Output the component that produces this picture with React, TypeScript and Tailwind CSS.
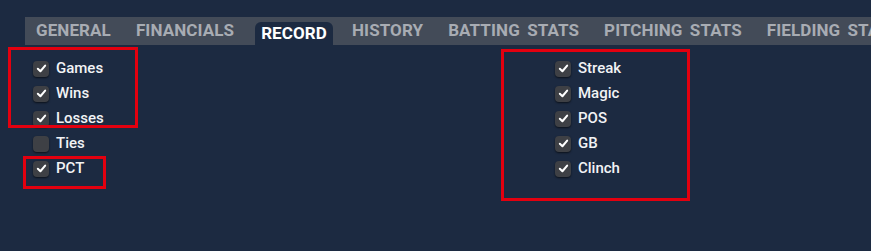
import { useState } from "react"

const tabs = ["GENERAL", "FINANCIALS", "RECORD", "HISTORY", "BATTING STATS", "PITCHING STATS", "FIELDING STATS"]

function Check({ label, checked }: { label: string; checked: boolean }) {
  const [on, setOn] = useState(checked)
  return (
    <button type="button" onClick={() => setOn(!on)} className="flex h-[25px] items-center gap-[7px]">
      <span className="flex h-[16px] w-[16px] items-center justify-center rounded-[4px] bg-[#3e4045] shadow-[0_1px_2px_rgba(0,0,0,0.6)]">
        {on && (
          <svg width="11" height="11" viewBox="0 0 12 12" fill="none">
            <path d="M2 6.3 L4.8 9 L10 2.8" stroke="white" strokeWidth="2.2" strokeLinecap="round" strokeLinejoin="round" />
          </svg>
        )}
      </span>
      <span className="text-[15px] font-medium text-[#f2f3f5]">{label}</span>
    </button>
  )
}

export default function App() {
  return (
    <div className="h-[251px] w-[871px] overflow-hidden bg-[#1c2a41] font-['Roboto',sans-serif]">
      <div className="pt-[17px] pl-[25px]">
        <div className="flex h-[28px] items-end overflow-hidden whitespace-nowrap bg-[#434b58] pl-[11px] tracking-[0.1px] [word-spacing:3px]">
          {tabs.map((t) =>
            t === "RECORD" ? (
              <div key={t} className="mr-[19px] ml-[-4px] flex h-[23px] shrink-0 items-center rounded-t-[6px] bg-[#1c2a41] px-[6px] text-[17px] font-bold text-white">
                {t}
              </div>
            ) : (
              <div key={t} className="mr-[25px] flex h-[28px] shrink-0 items-center text-[17px] font-bold text-[#a8acb3]">
                {t}
              </div>
            )
          )}
        </div>
      </div>

      <div className="relative flex pt-[11px]">
        <div className="flex w-[555px] flex-col items-start pl-[33px]">
          <Check label="Games" checked />
          <Check label="Wins" checked />
          <Check label="Losses" checked />
          <Check label="Ties" checked={false} />
          <Check label="PCT" checked />
        </div>
        <div className="flex flex-col items-start">
          <Check label="Streak" checked />
          <Check label="Magic" checked />
          <Check label="POS" checked />
          <Check label="GB" checked />
          <Check label="Clinch" checked />
        </div>

        <div className="pointer-events-none absolute left-[8px] top-[2px] h-[81px] w-[130px] border-[3px] border-[#e3000f]" />
        <div className="pointer-events-none absolute left-[23px] top-[111px] h-[33px] w-[83px] border-[3px] border-[#e3000f]" />
        <div className="pointer-events-none absolute left-[501px] top-[4px] h-[152px] w-[189px] border-[3px] border-[#e3000f]" />
      </div>
    </div>
  )
}
